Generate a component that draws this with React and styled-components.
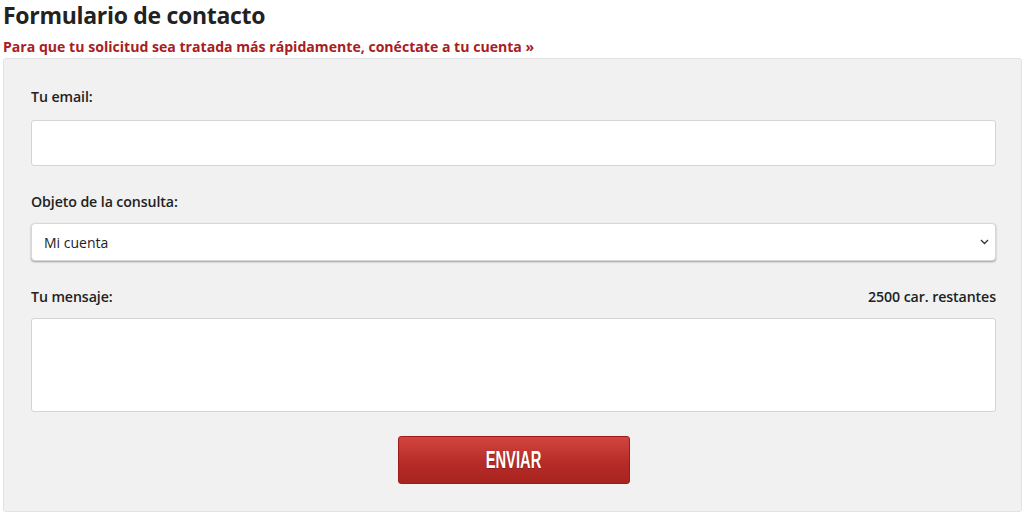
import React, { useState } from "react"
import styled, { createGlobalStyle } from "styled-components"

const GlobalStyle = createGlobalStyle`
  body {
    margin: 0;
    background: #fff;
    font-family: "Open Sans", "Noto Sans", sans-serif;
    color: #222;
  }
`

const Page = styled.div`
  padding: 0 2px 0 3px;
`

const Title = styled.h1`
  font-size: 23px;
  font-weight: 700;
  margin: 0;
  padding-top: 1px;
  line-height: 28px;
  color: #222;
  letter-spacing: -0.3px;
`

const LoginHint = styled.a`
  display: block;
  margin-top: 9px;
  font-size: 14.1px;
  font-weight: 700;
  line-height: 18px;
  color: #a8201e;
  text-decoration: none;
`

const Panel = styled.form`
  margin-top: 2px;
  background: #f1f1f1;
  border: 1px solid #e2e2e2;
  border-radius: 3px;
  padding: 28px 25px 27px 27px;
  display: flex;
  flex-direction: column;
`

const LabelRow = styled.div`
  display: flex;
  justify-content: space-between;
  align-items: center;
  font-size: 14.2px;
  font-weight: 600;
  line-height: 20px;
  color: #222;
  letter-spacing: -0.1px;
  margin-bottom: ${p => (p.$tight ? 11 : 13)}px;
`

const Field = styled.input`
  box-sizing: border-box;
  width: 100%;
  height: 46px;
  background: #fff;
  border: 1px solid #d4d4d4;
  border-radius: 3px;
  margin: 0 0 26px;
`

const SelectBox = styled.div`
  box-sizing: border-box;
  height: 38px;
  background: #fff;
  border: 1px solid #d8d8d8;
  border-radius: 4px;
  box-shadow: 0 1px 2px rgba(0, 0, 0, 0.35);
  display: flex;
  align-items: center;
  justify-content: space-between;
  padding: 0 6px 0 12px;
  font-size: 14px;
  color: #222;
  margin-bottom: 26px;
`

const Area = styled.textarea`
  box-sizing: border-box;
  width: 100%;
  height: 94px;
  background: #fff;
  border: 1px solid #d4d4d4;
  border-radius: 3px;
  resize: none;
  margin: 0 0 24px;
  display: block;
`

const Send = styled.button`
  align-self: center;
  width: 232px;
  height: 48px;
  border: 1px solid #9c1c1a;
  border-radius: 3px;
  background: linear-gradient(#d24440, #b52a26 60%, #a8231f);
  color: #fff;
  cursor: pointer;
  display: flex;
  align-items: center;
  justify-content: center;
  padding: 0;
`

const SendText = styled.span`
  display: inline-block;
  font-family: "Liberation Sans", Arial, sans-serif;
  font-weight: 700;
  font-size: 23px;
  transform: scaleX(0.64);
  text-shadow: 0 1px 1px rgba(0, 0, 0, 0.25);
`

const Chevron = () => (
  <svg width="9" height="6" viewBox="0 0 9 6" fill="none">
    <path d="M1 1l3.5 3.5L8 1" stroke="#333" strokeWidth="1.3" />
  </svg>
)

export default function App() {
  const [msg, setMsg] = useState("")
  return (
    <Page>
      <GlobalStyle />
      <Title>Formulario de contacto</Title>
      <LoginHint href="#">
        Para que tu solicitud sea tratada más rápidamente, conéctate a tu cuenta »
      </LoginHint>
      <Panel onSubmit={e => e.preventDefault()}>
        <LabelRow>Tu email:</LabelRow>
        <Field type="email" />
        <LabelRow $tight>Objeto de la consulta:</LabelRow>
        <SelectBox>
          <span>Mi cuenta</span>
          <Chevron />
        </SelectBox>
        <LabelRow $tight>
          <span>Tu mensaje:</span>
          <span>{2500 - msg.length} car. restantes</span>
        </LabelRow>
        <Area value={msg} onChange={e => setMsg(e.target.value)} />
        <Send type="submit">
          <SendText>ENVIAR</SendText>
        </Send>
      </Panel>
    </Page>
  )
}
